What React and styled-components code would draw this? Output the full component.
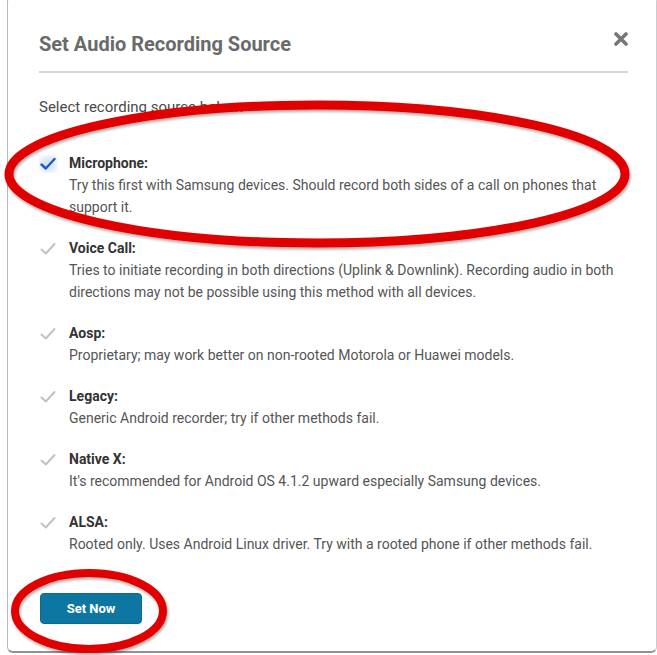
import React from "react";
import styled, { createGlobalStyle } from "styled-components";

const Global = createGlobalStyle`
  html, body { margin: 0; padding: 0; }
  body {
    background: #fff;
    font-family: Roboto, "Liberation Sans", Arial, sans-serif;
    overflow: hidden;
    height: 655px;
  }
`;

const Card = styled.div`
  position: relative;
  margin: -4px 0 0 7px;
  height: 657px;
  box-sizing: border-box;
  background: #fff;
  border: 1px solid #b4b9be;
  border-top-color: transparent;
  border-right-color: #c9ccd0;
  border-bottom: 2px solid #8d939a;
  border-radius: 6px;
  padding: 33px 28px 0 31px;
  display: flex;
  flex-direction: column;
`;

const Header = styled.div`
  display: flex;
  justify-content: space-between;
  align-items: flex-start;
  padding-bottom: 13px;
  border-bottom: 2px solid #d6d6d6;
`;

const Title = styled.h2`
  margin: 0;
  font-size: 20px;
  line-height: 28px;
  font-weight: 700;
  color: #6a6a6a;
`;

const Close = styled.button`
  border: 0;
  background: none;
  padding: 0;
  margin-top: 2px;
  cursor: pointer;
  display: flex;
`;

const Intro = styled.p`
  margin: 23px 0 34px;
  font-size: 15px;
  line-height: 22px;
  color: #4a4a4a;
`;

const List = styled.ul`
  list-style: none;
  margin: 0;
  padding: 0;
  display: flex;
  flex-direction: column;
  gap: 19px;
`;

const Item = styled.li`
  display: flex;
  gap: 12px;
`;

const CheckBox = styled.span`
  flex: none;
  width: 18px;
  height: 18px;
  margin-top: 3px;
  display: flex;
  align-items: center;
  justify-content: center;
  background: ${(p) => (p.$on ? "radial-gradient(circle, #dbe6fb 30%, #eef3fd 70%, transparent 100%)" : "transparent")};
`;

const Body = styled.div`
  display: flex;
  flex-direction: column;
`;

const Label = styled.span`
  font-size: 14px;
  line-height: 22px;
  font-weight: 700;
  color: #333;
`;

const Desc = styled.span`
  font-size: 14px;
  line-height: 22px;
  color: #555;
`;

const Footer = styled.div`
  margin-top: 38px;
  display: flex;
`;

const Button = styled.button`
  background: #0d77a1;
  color: #fff;
  border: 1px solid #0b6a90;
  border-radius: 4px;
  width: 102px;
  height: 31px;
  font-family: inherit;
  font-size: 13px;
  font-weight: 700;
  margin-left: 1px;
  cursor: pointer;
`;

const Annotation = styled.svg`
  position: absolute;
  left: -8px;
  top: 3px;
  width: 657px;
  height: 655px;
  pointer-events: none;
  overflow: visible;
`;

const Check = ({ on }) => (
  <svg width="16" height="14" viewBox="0 0 16 14">
    <path
      d="M1.5 7.5 L5.8 11.5 L14.5 2"
      fill="none"
      stroke={on ? "#1d57d8" : "#c2c2c2"}
      strokeWidth={on ? 2.4 : 2}
      strokeLinecap="round"
      strokeLinejoin="round"
    />
  </svg>
);

const items = [
  { label: "Microphone:", desc: "Try this first with Samsung devices. Should record both sides of a call on phones that support it.", on: true },
  { label: "Voice Call:", desc: "Tries to initiate recording in both directions (Uplink & Downlink). Recording audio in both directions may not be possible using this method with all devices." },
  { label: "Aosp:", desc: "Proprietary; may work better on non-rooted Motorola or Huawei models." },
  { label: "Legacy:", desc: "Generic Android recorder; try if other methods fail." },
  { label: "Native X:", desc: "It's recommended for Android OS 4.1.2 upward especially Samsung devices." },
  { label: "ALSA:", desc: "Rooted only. Uses Android Linux driver. Try with a rooted phone if other methods fail." },
];

export default function App() {
  return (
    <>
      <Global />
      <Card>
        <Header>
          <Title>Set Audio Recording Source</Title>
          <Close aria-label="Close">
            <svg width="14" height="14" viewBox="0 0 14 14">
              <path d="M2 2 L12 12 M12 2 L2 12" stroke="#777" strokeWidth="3.6" strokeLinecap="round" />
            </svg>
          </Close>
        </Header>
        <Intro>Select recording source below:</Intro>
        <List>
          {items.map((it) => (
            <Item key={it.label}>
              <CheckBox $on={it.on}>
                <Check on={it.on} />
              </CheckBox>
              <Body>
                <Label>{it.label}</Label>
                <Desc>{it.desc}</Desc>
              </Body>
            </Item>
          ))}
        </List>
        <Footer>
          <Button>Set Now</Button>
        </Footer>
        <Annotation viewBox="0 0 657 655">
          <defs>
            <filter id="sh" x="-10%" y="-10%" width="120%" height="130%">
              <feDropShadow dx="1" dy="2" stdDeviation="1.5" floodColor="#000" floodOpacity="0.35" />
            </filter>
          </defs>
          <ellipse cx="317" cy="174" rx="308" ry="69" fill="none" stroke="#e00000" strokeWidth="9" filter="url(#sh)" />
          <ellipse cx="89" cy="611" rx="74" ry="38" fill="none" stroke="#e00000" strokeWidth="8" filter="url(#sh)" />
        </Annotation>
      </Card>
    </>
  );
}
